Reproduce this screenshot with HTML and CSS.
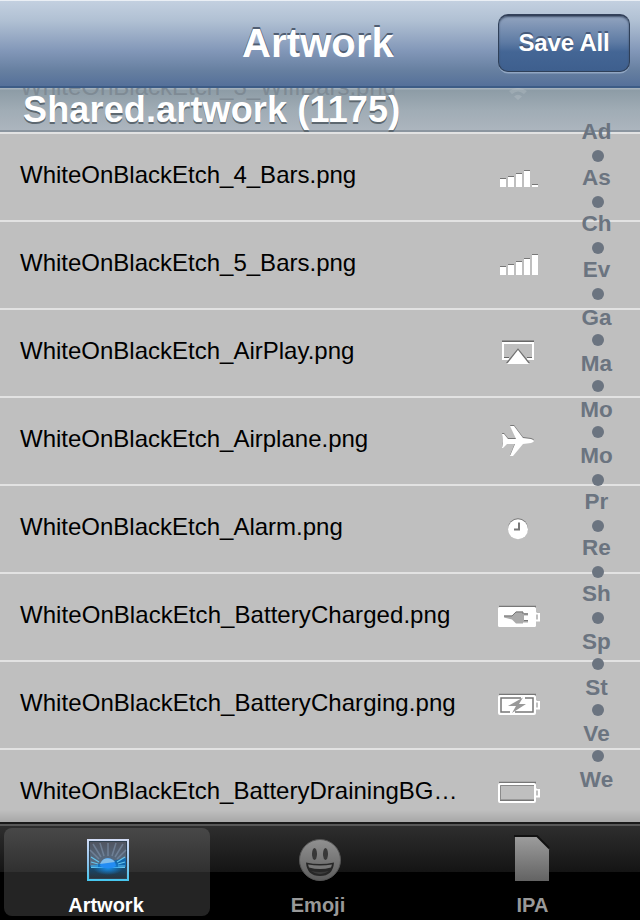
FILE: index.html
```html
<!DOCTYPE html>
<html lang="en">
<head>
<meta charset="utf-8">
<title>Artwork</title>
<link rel="stylesheet" href="styles.css">
</head>
<body>
<div class="app">
  <header class="navbar">
    <h1 class="title">Artwork</h1>
    <button class="save">Save All</button>
  </header>

  <main class="list">
    <div class="section">
      <span class="ghost">WhiteOnBlackEtch_3_WifiBars.png</span>
      <svg class="ghost-icon" width="20" height="12" viewBox="0 0 20 12"><path d="M1 3Q10-3 19 3L16 6Q10 1 4 6ZM6 8.500Q10 5 14 8.500L10 12Z" fill="#fff"/></svg>
      <h2 class="section-title">Shared.artwork (1175)</h2>
    </div>
    <div class="row"><span class="name">WhiteOnBlackEtch_4_Bars.png</span>
      <svg class="icon" width="48" height="40" viewBox="0 0 48 40"><path d="M6 12h6v2H6zM14 10h6v2h-6zM22 7h6v2h-6zM30 4h6v2h-6zM38 18h6v2h-6z" fill="#777"/><path d="M6 13h6v8H6zM14 11h6v10h-6zM22 8h6v13h-6zM30 5h6v16h-6zM38 19h6v2h-6z" fill="#fff"/></svg></div>
    <div class="row"><span class="name">WhiteOnBlackEtch_5_Bars.png</span>
      <svg class="icon" width="48" height="40" viewBox="0 0 48 40"><path d="M6 12h6v2H6zM14 10h6v2h-6zM22 7h6v2h-6zM30 4h6v2h-6zM38 0h6v2h-6z" fill="#777"/><path d="M6 13h6v8H6zM14 11h6v10h-6zM22 8h6v13h-6zM30 5h6v16h-6zM38 1h6v20h-6z" fill="#fff"/></svg></div>
    <div class="row"><span class="name">WhiteOnBlackEtch_AirPlay.png</span>
      <svg class="icon" width="48" height="40" viewBox="0 0 48 40"><path d="M8-1.500h32v2H8zM10 15h5v1.500h-5zM33 15h5v1.500h-5z" fill="#686868"/><path d="M15 17H9V1h30v16h-6" fill="none" stroke="#fff" stroke-width="2"/><path d="M12 21 24 6.300 36 21z" fill="#707070"/><path d="M13 22 24 8 35 22z" fill="#fff"/></svg></div>
    <div class="row"><span class="name">WhiteOnBlackEtch_Airplane.png</span>
      <svg class="icon" width="48" height="40" viewBox="0 0 48 40"><path class="etch" d="M8 4h2l4 5h8L16-4h4l9 12 8 1q3 1 3 2t-3 2l-8 1-10 12h-3l5-12h-8l-4 4H8l1-5v-4z" fill="#fff"/></svg></div>
    <div class="row"><span class="name">WhiteOnBlackEtch_Alarm.png</span>
      <svg class="icon" width="48" height="40" viewBox="0 0 48 40"><circle cx="24" cy="10.300" r="10" fill="#777"/><circle cx="24" cy="11.200" r="10" fill="#fff"/><path d="M25 4.500v7h-5" fill="none" stroke="#777" stroke-width="2"/></svg></div>
    <div class="row"><span class="name long">WhiteOnBlackEtch_BatteryCharged.png</span>
      <svg class="icon" width="48" height="40" viewBox="0 0 48 40"><path d="M5-.3h37v2H5zM43 6h3v2h-3z" fill="#777"/><rect x="4" y="1" width="38" height="20" rx="1.500" fill="#fff"/><path d="M42 7.500h3v7h-3" fill="none" stroke="#fff" stroke-width="2"/><path d="M10 9.500h8l4-4h7V7h5v2.500h-4V14h4v2.500h-5v1h-7l-4-4-8-2z" fill="#aaa"/><path d="M10 10h8l4-4h7v2M30 8h4M30 14.500h4" fill="none" stroke="#777"/></svg></div>
    <div class="row"><span class="name long">WhiteOnBlackEtch_BatteryCharging.png</span>
      <svg class="icon" width="48" height="40" viewBox="0 0 48 40"><path d="M5-.3h37v2H5zM43 6h3v2h-3z" fill="#777"/><rect x="5" y="2" width="36" height="18" rx="1" fill="none" stroke="#fff" stroke-width="2"/><rect x="6" y="3" width="34" height="16" fill="#fff"/><path d="M27 4H7v14h9M31 4h8v14H21" fill="none" stroke="#777" stroke-width="1.500"/><path d="M42 7.500h3v7h-3" fill="none" stroke="#fff" stroke-width="2"/><path d="M29 3.500 14 12h8l-4 7L32 10h-7z" fill="#999"/></svg></div>
    <div class="row last"><span class="name">WhiteOnBlackEtch_BatteryDrainingBG…</span>
      <svg class="icon" width="48" height="40" viewBox="0 0 48 40"><path d="M5-.3h37v2H5zM43 6h3v2h-3zM6 17.500h34v1.500H6z" fill="#777"/><rect x="5" y="2" width="36" height="18" rx="1" fill="none" stroke="#fff" stroke-width="2"/><path d="M6.500 18V3.500H40" fill="none" stroke="#8a8a8a"/><path d="M42 7.500h3v7h-3" fill="none" stroke="#fff" stroke-width="2"/></svg></div>
  </main>

  <nav class="index">
    <span>Ad</span><i></i><span>As</span><i></i><span>Ch</span><i></i><span>Ev</span><i class="mid"></i>
    <span>Ga</span><i class="up"></i><span>Ma</span><i class="up"></i><span>Mo</span><i class="up"></i><span>Mo</span><i></i>
    <span>Pr</span><i></i><span>Re</span><i></i><span>Sh</span><i class="mid"></i>
    <span>Sp</span><i class="up"></i><span>St</span><i class="up"></i><span>Ve</span><i class="up"></i><span>We</span>
  </nav>

  <footer class="tabbar">
    <div class="tab active">
      <svg class="tab-icon" width="50" height="50" viewBox="0 0 50 50">
        <defs>
          <linearGradient id="frame" x1="0" y1="0" x2="0" y2="1"><stop offset="0" stop-color="#d3dcf5"/><stop offset=".55" stop-color="#8fc4ed"/><stop offset="1" stop-color="#45c7ef"/></linearGradient>
          <linearGradient id="sky" x1="0" y1="0" x2="0" y2="1"><stop offset="0" stop-color="#515561"/><stop offset=".65" stop-color="#587088"/><stop offset=".66" stop-color="#124f7b"/><stop offset="1" stop-color="#28343e"/></linearGradient>
          <radialGradient id="glow"><stop offset="0" stop-color="#1790ed"/><stop offset="1" stop-color="#1790ed" stop-opacity="0"/></radialGradient>
        </defs>
        <rect x="4" y="4" width="42" height="42" fill="url(#frame)"/>
        <rect x="6" y="6" width="38" height="38" fill="#314150"/>
        <rect x="7" y="7" width="36" height="36" fill="url(#sky)"/>
        <path d="M7 31 43 23v9H7z" fill="#1268ae"/>
        <g stroke="#8094ad" stroke-width="1.500" opacity=".6"><path d="M25 21V8M21 21 17 8M29 21 33 8M18 22 10 9M32 22 40 9M16 24 7 15M34 24 43 15"/></g>
        <path d="M16 27 8 22M15 29 8 27M15 31H8M34 27 42 22M35 29 42 27M35 31h7M8 32.500h34" stroke="#64c4ed" stroke-width="1.200"/>
        <ellipse cx="25" cy="33" rx="15" ry="7" fill="url(#glow)"/>
        <path d="M17 31q0-3 3-6 5-4 10 0 3 3 3 6l-4 2h-8z" fill="#238cf3"/><path d="M17 29q1-3 4-5 5-2 9 1l2 2z" fill="#81bce9"/>
      </svg>
      <span class="label">Artwork</span>
    </div>
    <div class="tab">
      <svg class="tab-icon" width="50" height="50" viewBox="0 0 50 50">
        <defs><linearGradient id="face" x1="0" y1="0" x2="0" y2="1"><stop offset="0" stop-color="#919191"/><stop offset="1" stop-color="#5d5d5d"/></linearGradient></defs>
        <circle cx="25" cy="25" r="20.500" fill="url(#face)" stroke="#555"/>
        <ellipse cx="19.500" cy="19" rx="2.500" ry="6" fill="#383838"/><ellipse cx="30.500" cy="19" rx="2.500" ry="6" fill="#383838"/>
        <path d="M11 27.500q14 3 28 0-1 13.500-14 13.500T11 27.500z" fill="#272727"/><path d="M13 29.500q12 2 24 0l-1 3q-11 3-22 0z" fill="#777"/><path d="M16 36q9 2 18 0-9 6.500-18 0z" fill="#3b3b3b"/>
      </svg>
      <span class="label">Emoji</span>
    </div>
    <div class="tab">
      <svg class="tab-icon" width="50" height="50" viewBox="0 0 50 50">
        <defs><linearGradient id="page" x1="0" y1="0" x2="0" y2="1"><stop offset="0" stop-color="#9c9c9c"/><stop offset="1" stop-color="#636363"/></linearGradient></defs>
        <path d="M7 1h23l12 12" fill="none" stroke="#111" stroke-width="2"/>
        <path d="M8 2h21.500l12.500 12.500V46H8z" fill="url(#page)"/>
      </svg>
      <span class="label ipa">IPA</span>
    </div>
  </footer>
</div>
</body>
</html>
```
FILE: styles.css
```css
* { box-sizing: border-box; }
body { margin: 0; font-family: "Liberation Sans", Arial, sans-serif; }
h1, h2 { margin: 0; }
.app { position: relative; width: 640px; height: 920px; overflow: hidden; display: flex; flex-direction: column; background: #bfbfbf; }

.navbar {
  height: 88px; flex: none; display: grid; grid-template-columns: 1fr 154px 1fr; align-items: center; padding: 0 10px 2px 6px;
  border-top: 1px solid #eaeff5; border-bottom: 2px solid #3d5c86;
  background: linear-gradient(#c3d0e0 0, #b0c0d3 20px, #8297b8 50px, #667fa0 70px, #55709a 100%);
}
.title { grid-column: 2; white-space: nowrap; text-align: center; color: #fff; font-size: 40px; line-height: 46px; letter-spacing: 0.1px; text-shadow: 0 -2px 0 #505e72; }
.save {
  justify-self: end; width: 132px; height: 58px; padding: 0 0 1px; border: 1px solid #2f4059; border-top: 2px solid #33415a; border-radius: 10px;
  background: linear-gradient(#92a4bf, #5e7ba4 48%, #446695 65%, #3e5f8e);
  box-shadow: 0 2px 0 -0.5px #91a6c2, inset 0 1px 2px #40516b;
  color: #fff; font: bold 24px "Liberation Sans", Arial, sans-serif; letter-spacing: -0.2px; text-shadow: 0 -2px 0 #465a7a;
}

.list { flex: 1; min-height: 0; overflow: hidden; }
.section {
  position: relative; height: 46px; overflow: hidden; padding-left: 23px; border-bottom: 2px solid #e2e2e2;
  background: linear-gradient(#a5b1bb 0 1px, #8d9ca6 2px, #a0acb5 22px, #acb5be 42px, #8b959f 42px 44px);
}
.section-title { position: relative; color: #fff; font-size: 36px; line-height: 44px; letter-spacing: 0.15px; white-space: nowrap; text-shadow: 0 2px 0 #5d6870; }
.ghost { position: absolute; left: 20px; top: -15px; font-size: 24px; line-height: 28px; color: #7e8a94; }
.ghost-icon { position: absolute; left: 508px; top: 0; opacity: .13; }
.row { height: 88px; display: flex; align-items: flex-start; padding-left: 20px; border-bottom: 2px solid #e2e2e2; background: #bfbfbf; }
.name { width: 474px; padding-top: 27px; font-size: 24px; line-height: 28px; white-space: nowrap; color: #000; }
.long { letter-spacing: 0.06px; }
.icon { margin-top: 32px; overflow: visible; flex: none; }
.etch { filter: drop-shadow(0 -1px 0 #777); }
.row.last { height: 74px; border-bottom: 0; background: linear-gradient(#bfbfbf 60px, #a3a3a3 74px); }

.index { position: absolute; top: 121px; left: 577px; width: 40px; display: flex; flex-direction: column; align-items: center; color: #6b7480; font-size: 22.5px; font-weight: bold; }
.index span { height: 22px; line-height: 22px; margin-left: -1px; }
.index i { width: 12px; height: 12px; margin: 7px 0 5px 2px; border-radius: 50%; background: #6b7480; }
.index .up { margin-top: 5px; margin-bottom: 7px; }
.index .mid { margin-bottom: 7px; }

.tabbar {
  height: 98px; flex: none; display: grid; grid-template-columns: 206px 206px 206px; column-gap: 6px; padding: 4px 4px;
  border-top: 2px solid #191919;
  background: linear-gradient(#575757 0 2px, #2e2e2e 2px, #141414 48px, #000 48px);
}
.tab { height: 88px; display: flex; flex-direction: column; align-items: center; border-radius: 8px; }
.active { background: linear-gradient(#484848, #303030 44px, #242424 44px); }
.tab-icon { display: block; margin-top: 7px; margin-left: 1px; }
.label { margin-top: 9px; margin-left: -2px; font-size: 20px; line-height: 22px; font-weight: bold; color: #999; }
.label.ipa { margin-left: 3px; }
.active .label { color: #fff; }
```
